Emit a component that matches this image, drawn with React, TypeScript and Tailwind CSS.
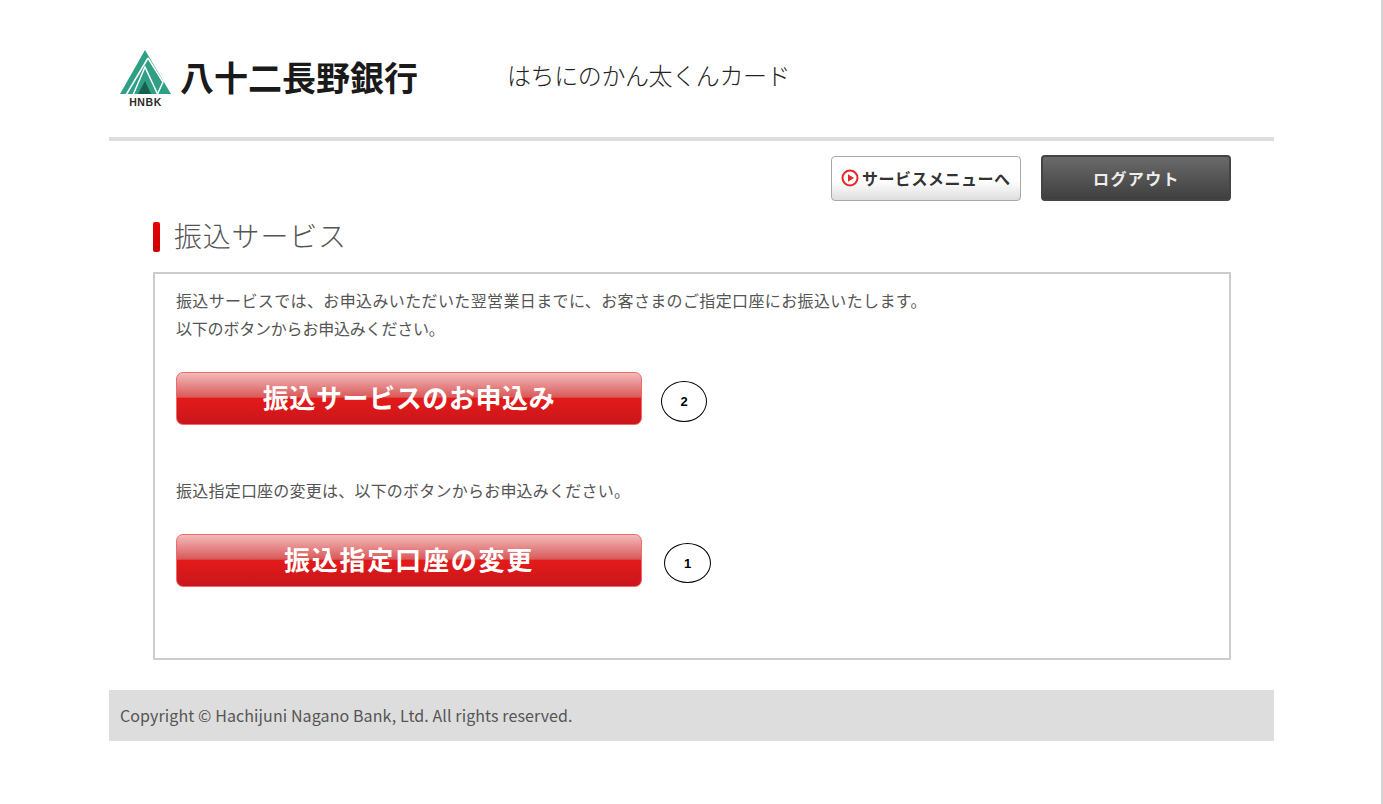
const JP = `font-['Noto_Sans_CJK_JP',sans-serif]`;

function Logo() {
  return (
    <svg width="52" height="60" viewBox="0 0 52 60" className="shrink-0">
      <polygon points="25,1 0,45 51,45" fill="#2f9f86" />
      <polyline points="28,9 6,46" fill="none" stroke="#fff" strokeWidth="1.5" />
      <polyline points="28,9 43,33 37,46" fill="none" stroke="#fff" strokeWidth="1.5" />
      <polyline points="13,46 25,18 38,46" fill="none" stroke="#fff" strokeWidth="1.5" />
      <polygon points="25,32 18,45 31,45" fill="#17604f" />
      <text x="25.5" y="57" textAnchor="middle" fontSize="10.5" fontWeight="700" letterSpacing="0.6" fill="#2b2b2b" fontFamily="Liberation Sans, sans-serif">HNBK</text>
    </svg>
  );
}

function RedButton({ label, tracking }: { label: string; tracking: string }) {
  return (
    <div className={`w-[466px] h-[53px] rounded-[7px] border border-[#f06a6a] bg-[linear-gradient(#f4baba_0%,#d95a5a_47%,#e41a1a_50%,#c9161b_100%)] flex items-center justify-center pb-[4px] text-white text-[26px] font-bold ${tracking}`}>
      {label}
    </div>
  );
}

export default function App() {
  return (
    <div className={`relative h-[804px] w-full overflow-hidden bg-white ${JP}`}>
      <div className="absolute right-0 top-0 bottom-0 w-[2px] bg-[#d4d4d4]" />
      <div className="ml-[109px] w-[1165px]">
        <header className="h-[141px] border-b-4 border-[#dddddd] flex items-start pl-[11px] pt-[49px]">
          <Logo />
          <div className="ml-[8px] mt-[4px] text-[34px] leading-[48px] font-bold text-[#1a1a1a] w-[327px]">八十二長野銀行</div>
          <div className="mt-[6px] text-[24px] leading-[40px] font-light text-[#222] tracking-[-0.4px]">はちにのかん太くんカード</div>
        </header>

        <div className="flex justify-end items-end gap-[20px] pr-[43px] mt-[14px]">
          <div className="w-[190px] h-[45px] rounded-[4px] border border-[#a8a8a8] bg-[linear-gradient(#ffffff_0%,#ffffff_55%,#dedede_100%)] flex items-center pl-[9px] pb-[1px] gap-[3px]">
            <svg width="18" height="18" viewBox="0 0 18 18">
              <circle cx="9" cy="9" r="7.5" fill="#fff" stroke="#e8262c" strokeWidth="2" />
              <polygon points="7,5.2 13,9 7,12.8" fill="#e8262c" />
            </svg>
            <span className="text-[16px] font-bold text-[#333] tracking-[0.5px]">サービスメニューへ</span>
          </div>
          <div className="w-[190px] h-[46px] rounded-[4px] border-2 border-[#444] bg-[linear-gradient(#6a6a6a_0%,#3f3f3f_100%)] flex items-center justify-center">
            <span className="ml-[1px] text-[16px] font-bold text-[#eeeeee] tracking-[1.4px]">ログアウト</span>
          </div>
        </div>

        <div className="ml-[44px] mt-[20px] flex items-center h-[32px]">
          <div className="w-[7px] h-[30px] rounded-[2px] bg-[linear-gradient(#e80000,#cc0000)]" />
          <h1 className="ml-[14px] mb-[4px] text-[28px] leading-[32px] font-light text-[#555] tracking-[0.8px]">振込サービス</h1>
        </div>

        <main className="relative ml-[44px] mt-[19px] w-[1078px] h-[388px] border-2 border-[#cccccc] pl-[21px] pt-[12px] text-[16px] leading-[28px] text-[#555]">
          <p className="tracking-[0.37px]">振込サービスでは、お申込みいただいた翌営業日までに、お客さまのご指定口座にお振込いたします。</p>
          <p className="tracking-[-0.2px]">以下のボタンからお申込みください。</p>
          <div className="mt-[30px]">
            <RedButton label="振込サービスのお申込み" tracking="tracking-[0.6px]" />
          </div>
          <p className="mt-[51px] tracking-[0.22px]">振込指定口座の変更は、以下のボタンからお申込みください。</p>
          <div className="mt-[30px]">
            <RedButton label="振込指定口座の変更" tracking="tracking-[1.8px]" />
          </div>
          <div className="absolute left-[506px] top-[107px] w-[46px] h-[41px] rounded-[50%] border border-black flex items-center justify-center text-[13px] leading-none font-bold text-black font-['Liberation_Sans',sans-serif]">2</div>
          <div className="absolute left-[509px] top-[269px] w-[47px] h-[40px] rounded-[50%] border border-black flex items-center justify-center text-[13px] leading-none font-bold text-black font-['Liberation_Sans',sans-serif]">1</div>
        </main>

        <footer className="mt-[30px] h-[51px] bg-[#dddddd] flex items-center pl-[11px] pb-[2px] text-[16px] tracking-[0.1px] text-[#555]">
          Copyright © Hachijuni Nagano Bank, Ltd. All rights reserved.
        </footer>
      </div>
    </div>
  );
}
